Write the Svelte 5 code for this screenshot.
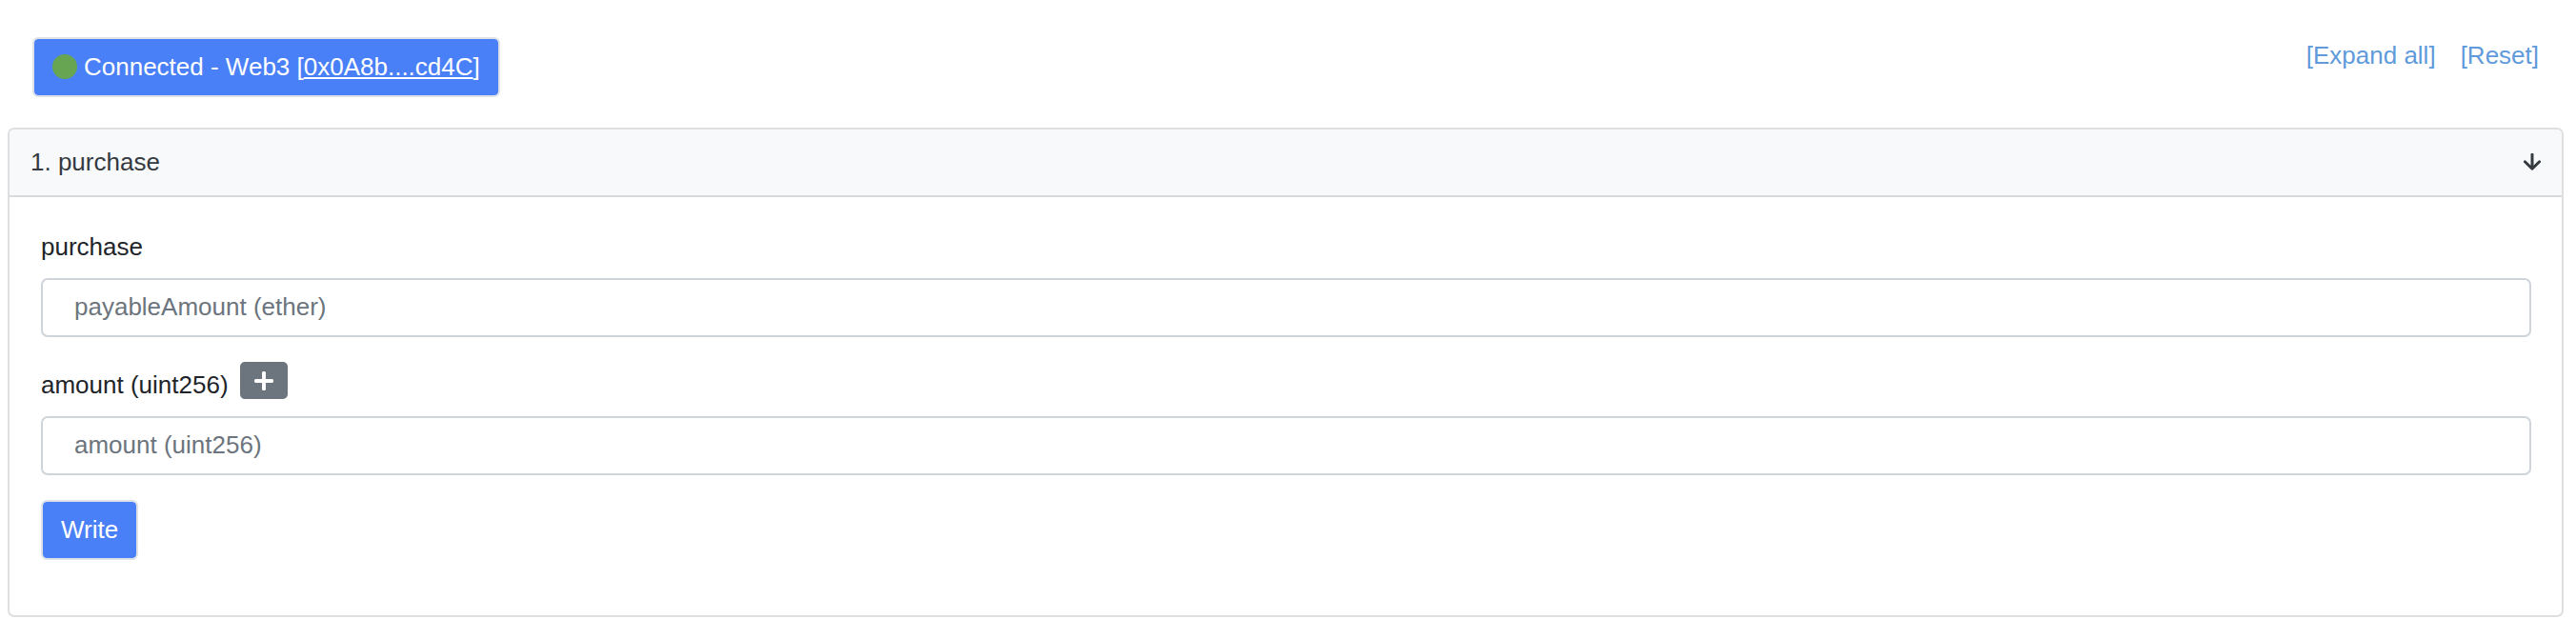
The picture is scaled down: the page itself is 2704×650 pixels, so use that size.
<script>
  let open = $state(true);
  let payable = $state('');
  let amount = $state('');

  function addZeros() {
    amount = (amount || '1') + '0'.repeat(18);
  }

  function reset() {
    open = false;
    payable = '';
    amount = '';
  }
</script>

<main>
  <div class="topbar">
    <button type="button" class="primary">
      <svg class="dot" viewBox="0 0 26 26" aria-hidden="true"><circle cx="13" cy="13" r="13" /></svg>
      <span>Connected - Web3 [<span class="address">0x0A8b....cd4C</span>]</span>
    </button>
    <nav>
      <a href="#expand" onclick={(e) => { e.preventDefault(); open = true; }}>[Expand all]</a>
      <a href="#reset" onclick={(e) => { e.preventDefault(); reset(); }}>[Reset]</a>
    </nav>
  </div>

  <section class="card">
    <button type="button" class="card-header" class:open aria-expanded={open} onclick={() => (open = !open)}>
      <span>1. purchase</span>
      <svg class="arrow" viewBox="0 0 18 18" aria-hidden="true">
        <path d="M9 1.2V16M1.4 8.8L9 16.2L16.6 8.8" />
      </svg>
    </button>

    {#if open}
      <form onsubmit={(e) => e.preventDefault()}>
        <div class="field">
          <label for="payable">purchase</label>
          <input id="payable" type="text" placeholder="payableAmount (ether)" bind:value={payable} />
        </div>
        <div class="field">
          <div class="label-row">
            <label for="amount">amount (uint256)</label>
            <button type="button" class="plus" aria-label="Add zeros" onclick={addZeros}>
              <svg viewBox="0 0 20 20" aria-hidden="true"><path d="M10 1.8V18.2M1.8 10H18.2" /></svg>
            </button>
          </div>
          <input id="amount" type="text" placeholder="amount (uint256)" bind:value={amount} />
        </div>
        <button type="submit" class="primary">Write</button>
      </form>
    {/if}
  </section>
</main>

<style>
  :global(body) {
    margin: 0;
    background: #fff;
  }

  main {
    padding: 39px 13px 2px 8px;
    color: #212529;
    font: 26px/40px "Liberation Sans", Arial, sans-serif;
  }

  main :is(button, input) {
    box-sizing: border-box;
    margin: 0;
    font: inherit;
  }

  button {
    cursor: pointer;
  }

  .topbar {
    display: flex;
    justify-content: space-between;
    align-items: flex-start;
    padding: 0 26px 32px;
  }

  .primary {
    display: flex;
    align-items: center;
    gap: 7px;
    padding: 9px 19px 10px;
    border: 2px solid #dee2e6;
    border-radius: 6px;
    background: #4a80f7;
    background-clip: padding-box;
    color: #fff;
  }

  .dot {
    width: 26px;
    height: 26px;
    fill: #67a552;
  }

  .address {
    text-decoration: underline;
    text-decoration-thickness: 2px;
    text-underline-offset: 2px;
  }

  nav {
    display: flex;
    gap: 26px;
    line-height: 38px;
  }

  a {
    color: #5f9ada;
    text-decoration: none;
  }

  .card {
    border: 2px solid #dedfe0;
    border-radius: 7px;
    overflow: hidden;
  }

  .card-header {
    display: flex;
    justify-content: space-between;
    align-items: center;
    width: 100%;
    padding: 14px 22px 15px;
    border: 0;
    background: #f8f9fb;
    color: #343a40;
    text-align: left;
  }

  .card-header.open {
    border-bottom: 2px solid #d8dadc;
  }

  .arrow {
    width: 18px;
    height: 18px;
    fill: none;
    stroke: #343a40;
    stroke-width: 3;
    stroke-linecap: round;
    stroke-linejoin: round;
  }

  form {
    display: flex;
    flex-direction: column;
    align-items: flex-start;
    gap: 26px;
    padding: 32px 32px 58px 33px;
  }

  .field {
    display: flex;
    flex-direction: column;
    gap: 13px;
    width: 100%;
  }

  .label-row {
    display: flex;
    align-items: flex-end;
    gap: 12px;
  }

  input {
    width: 100%;
    height: 62px;
    padding: 8px 33px 10px;
    border: 2px solid #ced4da;
    border-radius: 7px;
    background: #fff;
    color: #495057;
  }

  input::placeholder {
    color: #6c757d;
    opacity: 1;
  }

  .plus {
    display: flex;
    align-items: center;
    justify-content: center;
    width: 50px;
    height: 39px;
    margin-bottom: 5px;
    padding: 0;
    border: 0;
    border-radius: 5px;
    background: #6c757d;
  }

  .plus svg {
    width: 20px;
    height: 20px;
    fill: none;
    stroke: #fff;
    stroke-width: 4;
    stroke-linecap: round;
  }
</style>
